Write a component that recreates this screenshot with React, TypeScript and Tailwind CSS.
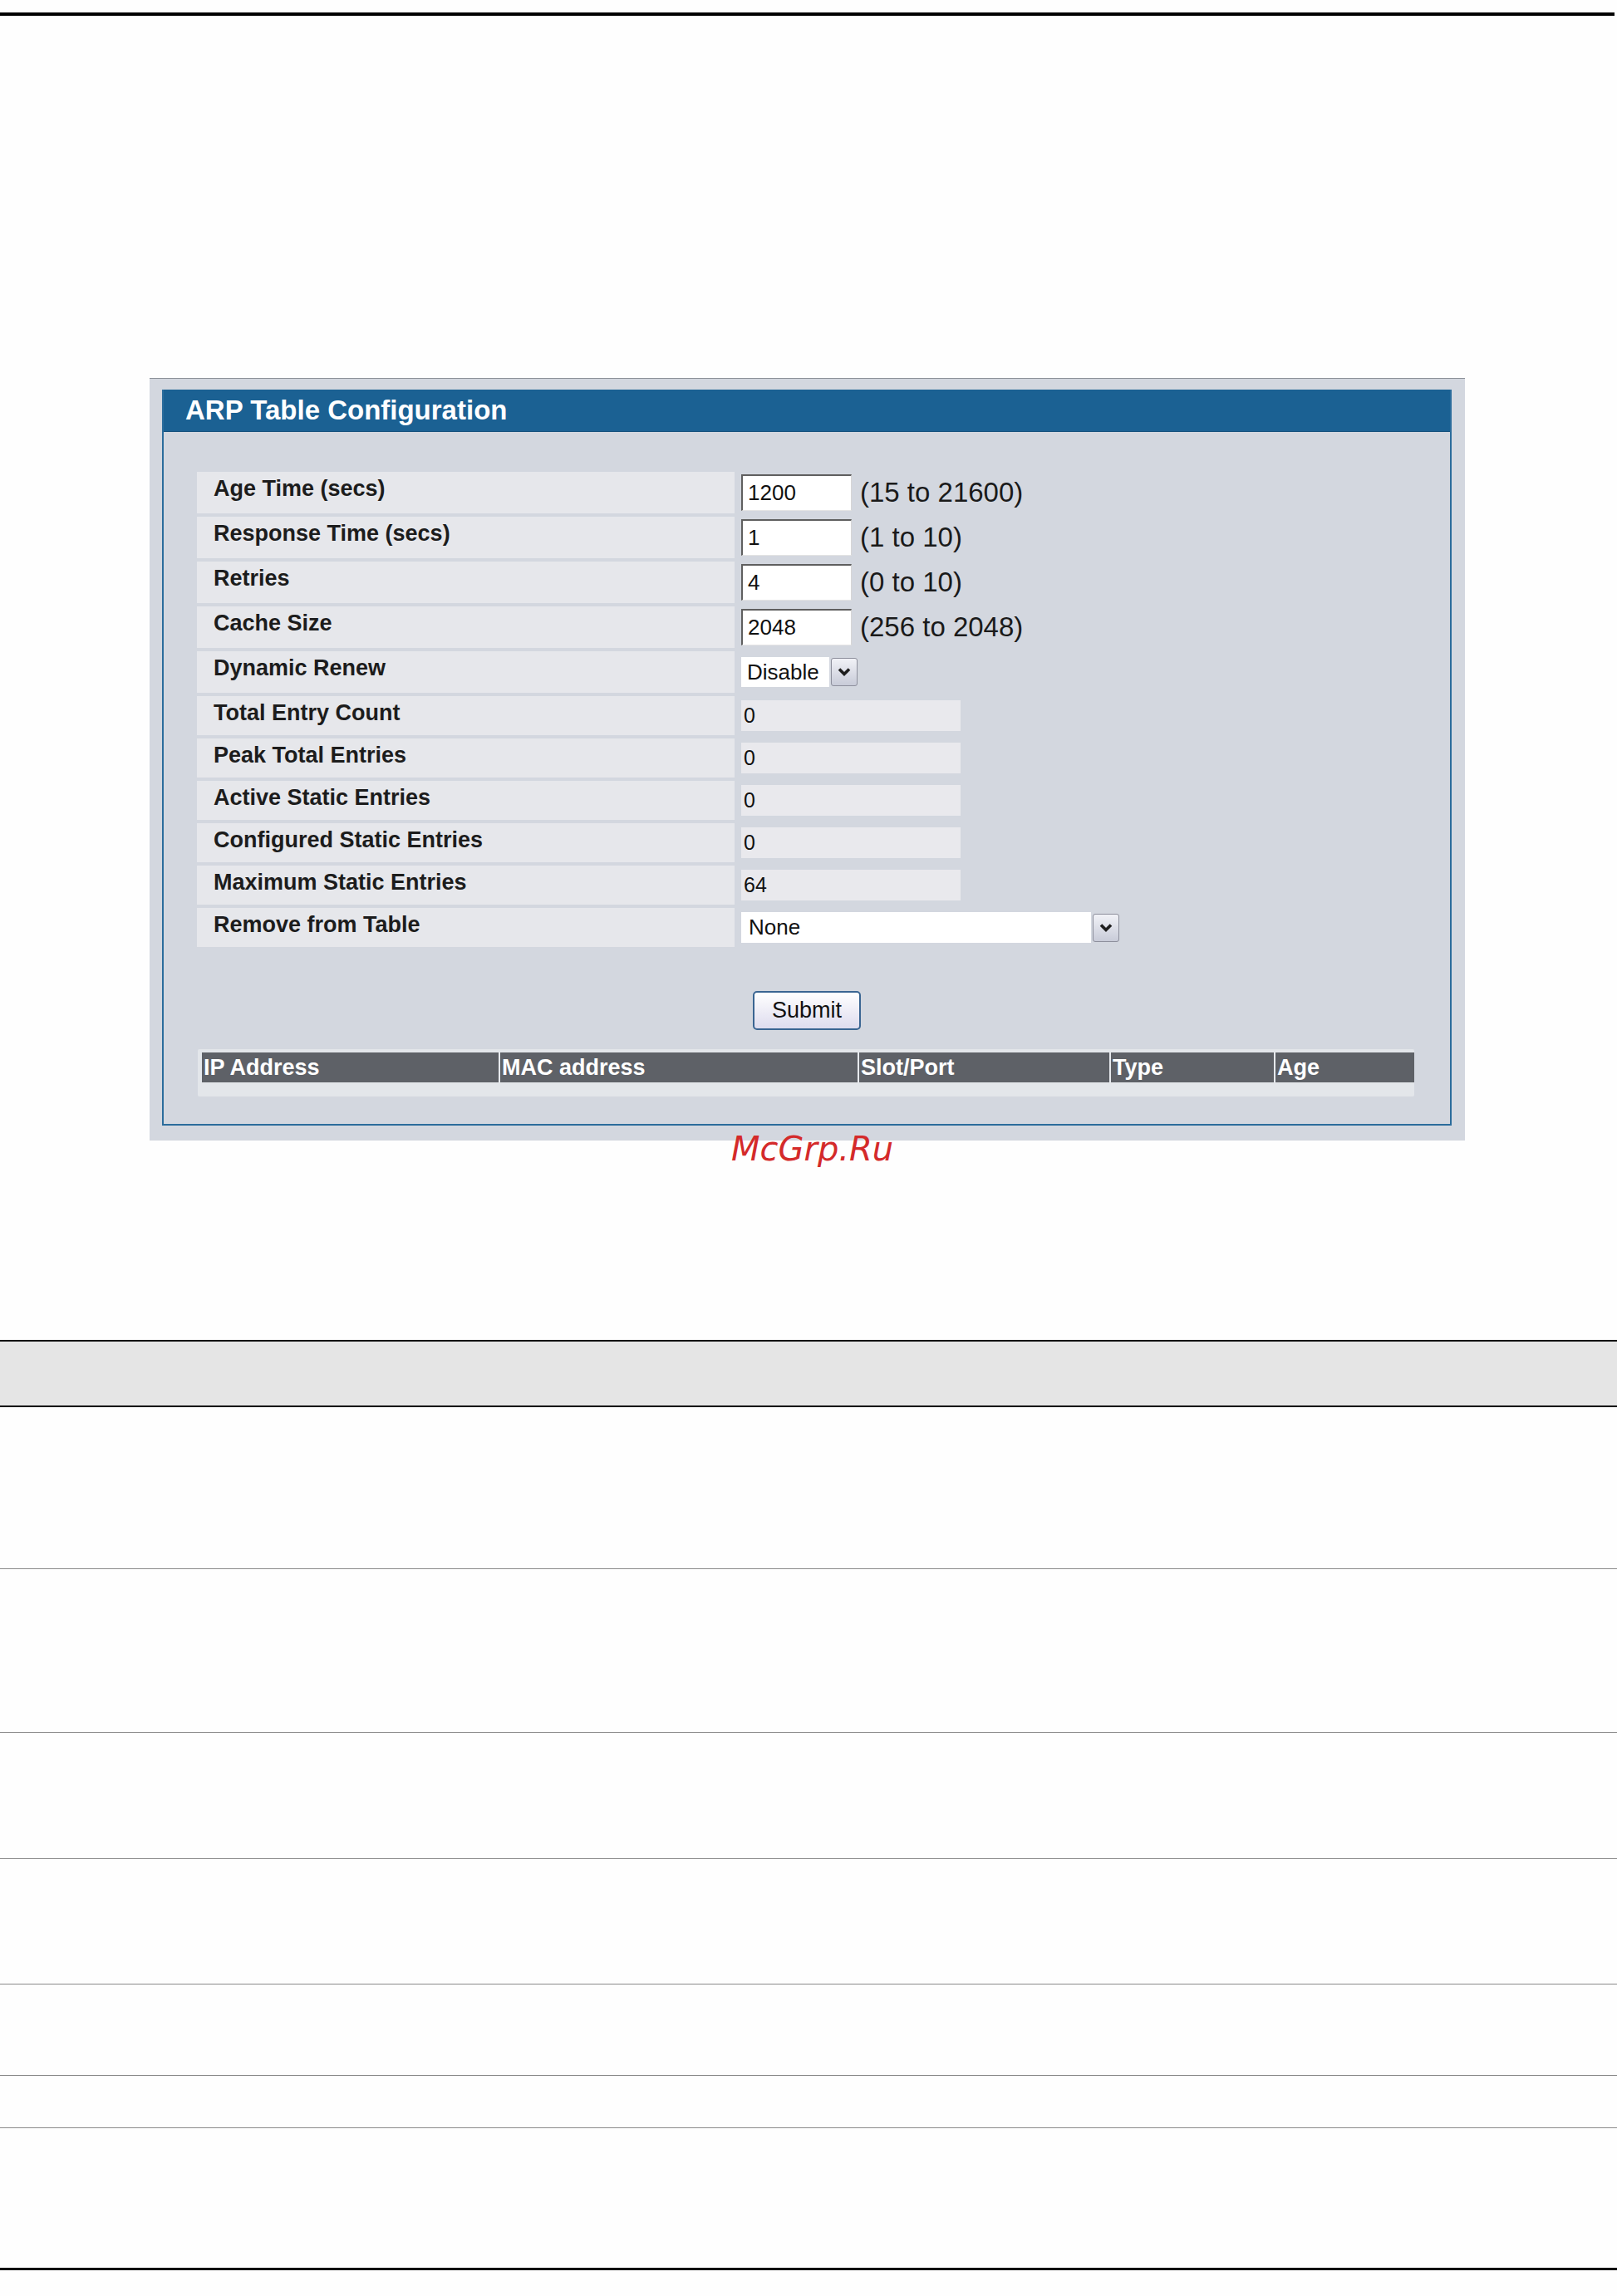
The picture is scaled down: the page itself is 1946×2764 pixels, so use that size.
import React from 'react';

interface InputRow {
  label: string;
  value: string;
  range: string;
}

const inputRows: InputRow[] = [
  { label: 'Age Time (secs)', value: '1200', range: '(15 to 21600)' },
  { label: 'Response Time (secs)', value: '1', range: '(1 to 10)' },
  { label: 'Retries', value: '4', range: '(0 to 10)' },
  { label: 'Cache Size', value: '2048', range: '(256 to 2048)' },
];

const readRows = [
  { label: 'Total Entry Count', value: '0' },
  { label: 'Peak Total Entries', value: '0' },
  { label: 'Active Static Entries', value: '0' },
  { label: 'Configured Static Entries', value: '0' },
  { label: 'Maximum Static Entries', value: '64' },
];

const columns = [
  { name: 'IP Address', w: 'w-[357px]' },
  { name: 'MAC address', w: 'w-[432px] border-l-2 border-[#e6e9ed]' },
  { name: 'Slot/Port', w: 'w-[303px] border-l-2 border-[#e6e9ed]' },
  { name: 'Type', w: 'w-[198px] border-l-2 border-[#e6e9ed]' },
  { name: 'Age', w: 'w-[166px] border-l-2 border-[#e6e9ed]' },
];

// bottom table rows of the manual page (heights include the 1px rule)
const docRows = ['h-[195px]', 'h-[197px]', 'h-[152px]', 'h-[151px]', 'h-[110px]', 'h-[63px]'];

function Arrow() {
  return (
    <div className="w-[32px] h-[34px] flex items-center justify-center rounded-[3px] border border-[#8d8f9c] bg-gradient-to-b from-[#f1f2f7] to-[#c8cbd8]">
      <svg width="20" height="14" viewBox="0 0 20 14">
        <polyline points="4,3.5 10,9.5 16,3.5" fill="none" stroke="#1e1e1e" strokeWidth="3.6" />
      </svg>
    </div>
  );
}

function Label({ text, h }: { text: string; h: string }) {
  return (
    <div className={`w-[647px] ${h} bg-[#e6e7eb] pl-[20px] pt-[7px] text-[27px] leading-none font-bold text-[#1c1c1c]`}>
      {text}
    </div>
  );
}

export default function App() {
  return (
    <div className="w-[1946px] h-[2764px] bg-[#fefefe] font-['Liberation_Sans',Arial,sans-serif] flex flex-col">
      <div className="mt-[15px] h-[4px] w-[1943px] bg-black" />

      {/* outer frame */}
      <div className="mt-[436px] ml-[180px] w-[1583px] bg-[#d3d7df] border-t border-[#8c9098] pt-[13px] pl-[15px] pr-[16px] pb-[18px]">
        <div className="w-[1552px] border-x-2 border-b-2 border-[#2b6c9c] flex flex-col">
          <div className="h-[51px] bg-[#1b6193] border-b border-[#14507c] flex items-center pl-[26px] text-[33px] font-bold text-white">
            ARP Table Configuration
          </div>

          <div className="pt-[48px] pl-[40px] flex flex-col gap-[4px]">
            {inputRows.map(r => (
              <div key={r.label} className="flex gap-[8px]">
                <Label text={r.label} h="h-[50px]" />
                <div className="flex items-center">
                  <div className="w-[133px] h-[44px] bg-white border-t-2 border-l-2 border-r border-b border-t-[#5f5f5f] border-l-[#5f5f5f] border-r-[#d6d6d6] border-b-[#e4e4e4] flex items-center pl-[6px] text-[26px] text-[#111]">
                    {r.value}
                  </div>
                  <span className="ml-[10px] text-[33px] text-[#1a1a1a]">{r.range}</span>
                </div>
              </div>
            ))}

            <div className="flex gap-[8px]">
              <Label text="Dynamic Renew" h="h-[50px]" />
              <div className="flex items-center gap-[2px]">
                <div className="w-[106px] h-[36px] bg-white flex items-center pl-[7px] text-[26px] text-[#111]">Disable</div>
                <Arrow />
              </div>
            </div>

            {readRows.map(r => (
              <div key={r.label} className="flex gap-[8px]">
                <Label text={r.label} h="h-[47px]" />
                <div className="flex items-center">
                  <div className="w-[264px] h-[37px] bg-[#e9e9ed] flex items-center pl-[3px] text-[25px] text-[#111]">
                    {r.value}
                  </div>
                </div>
              </div>
            ))}

            <div className="flex gap-[8px]">
              <Label text="Remove from Table" h="h-[47px]" />
              <div className="flex items-center gap-[2px]">
                <div className="w-[421px] h-[37px] bg-white flex items-center pl-[9px] text-[26px] text-[#111]">None</div>
                <Arrow />
              </div>
            </div>
          </div>

          <div className="mt-[53px] flex justify-center">
            <button className="w-[130px] h-[47px] rounded-[5px] border-2 border-[#3a6592] bg-gradient-to-b from-white to-[#dedcee] text-[27px] text-[#111]">
              Submit
            </button>
          </div>

          <div className="mt-[23px] mb-[33px] ml-[41px] w-[1464px] bg-[#e3e6ea] pt-[4px] pl-[5px] rounded-[2px]">
            <div className="flex h-[36px] bg-[#5e6167]">
              {columns.map(c => (
                <div key={c.name} className={`${c.w} flex items-center pl-[2px] text-[27px] font-bold text-white`}>
                  {c.name}
                </div>
              ))}
            </div>
            <div className="h-[17px]" />
          </div>
        </div>
      </div>

      <div className="relative -mt-[10px] ml-[880px] text-[40px] leading-none italic text-[#d42a2a] font-['DejaVu_Sans',sans-serif]">
        McGrp.Ru
      </div>

      {/* document table below the screenshot */}
      <div className="mt-[210px] w-[1946px] h-[81px] border-y-2 border-black bg-[#e5e5e5]" />
      {docRows.map((h, i) => (
        <div key={i} className={`w-[1946px] ${h} border-b border-[#8a8a8a]`} />
      ))}
      <div className="w-[1946px] h-[168px]" />
      <div className="w-[1946px] h-[3px] bg-black" />
    </div>
  );
}
